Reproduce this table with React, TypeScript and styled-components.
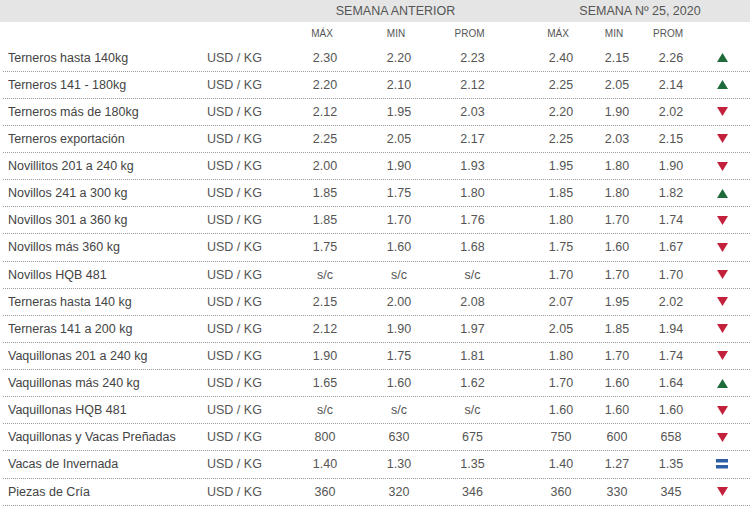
import React from "react";
import styled, { createGlobalStyle } from "styled-components";

type Trend = "up" | "down" | "same";

type Row = {
  name: string;
  prev: [string, string, string];
  cur: [string, string, string];
  trend: Trend;
};

const rows: Row[] = [
  { name: "Terneros hasta 140kg", prev: ["2.30", "2.20", "2.23"], cur: ["2.40", "2.15", "2.26"], trend: "up" },
  { name: "Terneros 141 - 180kg", prev: ["2.20", "2.10", "2.12"], cur: ["2.25", "2.05", "2.14"], trend: "up" },
  { name: "Terneros más de 180kg", prev: ["2.12", "1.95", "2.03"], cur: ["2.20", "1.90", "2.02"], trend: "down" },
  { name: "Terneros exportación", prev: ["2.25", "2.05", "2.17"], cur: ["2.25", "2.03", "2.15"], trend: "down" },
  { name: "Novillitos 201 a 240 kg", prev: ["2.00", "1.90", "1.93"], cur: ["1.95", "1.80", "1.90"], trend: "down" },
  { name: "Novillos 241 a 300 kg", prev: ["1.85", "1.75", "1.80"], cur: ["1.85", "1.80", "1.82"], trend: "up" },
  { name: "Novillos 301 a 360 kg", prev: ["1.85", "1.70", "1.76"], cur: ["1.80", "1.70", "1.74"], trend: "down" },
  { name: "Novillos más 360 kg", prev: ["1.75", "1.60", "1.68"], cur: ["1.75", "1.60", "1.67"], trend: "down" },
  { name: "Novillos HQB 481", prev: ["s/c", "s/c", "s/c"], cur: ["1.70", "1.70", "1.70"], trend: "down" },
  { name: "Terneras hasta 140 kg", prev: ["2.15", "2.00", "2.08"], cur: ["2.07", "1.95", "2.02"], trend: "down" },
  { name: "Terneras 141 a 200 kg", prev: ["2.12", "1.90", "1.97"], cur: ["2.05", "1.85", "1.94"], trend: "down" },
  { name: "Vaquillonas 201 a 240 kg", prev: ["1.90", "1.75", "1.81"], cur: ["1.80", "1.70", "1.74"], trend: "down" },
  { name: "Vaquillonas más 240 kg", prev: ["1.65", "1.60", "1.62"], cur: ["1.70", "1.60", "1.64"], trend: "up" },
  { name: "Vaquillonas HQB 481", prev: ["s/c", "s/c", "s/c"], cur: ["1.60", "1.60", "1.60"], trend: "down" },
  { name: "Vaquillonas y Vacas Preñadas", prev: ["800", "630", "675"], cur: ["750", "600", "658"], trend: "down" },
  { name: "Vacas de Invernada", prev: ["1.40", "1.30", "1.35"], cur: ["1.40", "1.27", "1.35"], trend: "same" },
  { name: "Piezas de Cría", prev: ["360", "320", "346"], cur: ["360", "330", "345"], trend: "down" },
];

const GlobalStyle = createGlobalStyle`
  html, body {
    margin: 0;
    padding: 0;
    background: #ffffff;
  }
  body {
    font-family: "Liberation Sans", Arial, sans-serif;
  }
`;

const COLS = "200px 85px 74px 74px 73px 24px 56px 56px 52px 56px";

const Table = styled.div`
  width: 750px;
  color: #4a4a4a;
`;

const WeekBar = styled.div`
  display: grid;
  grid-template-columns: ${COLS};
  height: 22px;
  align-items: center;
  background: #e5e5e5;
  font-size: 12.5px;
  color: #555;
`;

const WeekTitle = styled.div<{ $from: number; $to: number }>`
  grid-column: ${(p) => p.$from} / ${(p) => p.$to};
  text-align: center;
`;

const SubHead = styled.div`
  display: grid;
  grid-template-columns: ${COLS};
  height: 22.5px;
  align-items: center;
  font-size: 10px;
  color: #777;
`;

const DataRow = styled.div`
  display: grid;
  grid-template-columns: ${COLS};
  height: 26.125px;
  align-items: center;
  margin-left: 3px;
  border-bottom: 1px dotted #9a9a9a;
  font-size: 12.5px;
`;

const Name = styled.div`
  padding-left: 5px;
  color: #444;
  white-space: nowrap;
`;

const Unit = styled.div`
  padding-left: 4px;
  color: #555;
`;

const Cell = styled.div<{ $col?: number }>`
  text-align: center;
  color: #555;
  ${(p) => (p.$col ? `grid-column: ${p.$col};` : "")}
`;

const IconCell = styled.div`
  grid-column: 10;
  display: flex;
  justify-content: center;
  margin-left: -6px;
`;

const TrendIcon = ({ trend }: { trend: Trend }) => {
  if (trend === "up")
    return (
      <svg width="11" height="9" viewBox="0 0 11 9">
        <polygon points="5.5,0 11,9 0,9" fill="#1f6b3c" />
      </svg>
    );
  if (trend === "down")
    return (
      <svg width="11" height="9" viewBox="0 0 11 9">
        <polygon points="0,0 11,0 5.5,9" fill="#c3213b" />
      </svg>
    );
  return (
    <svg width="12" height="10" viewBox="0 0 12 10">
      <rect x="0" y="0" width="12" height="3.5" fill="#2d5fa5" />
      <rect x="0" y="6" width="12" height="3.5" fill="#2d5fa5" />
    </svg>
  );
};

export default function App() {
  return (
    <>
      <GlobalStyle />
      <Table>
        <WeekBar>
          <WeekTitle $from={3} $to={6}>SEMANA ANTERIOR</WeekTitle>
          <WeekTitle $from={7} $to={11}>SEMANA Nº 25, 2020</WeekTitle>
        </WeekBar>
        <SubHead>
          <Cell $col={3}>MÁX</Cell>
          <Cell>MIN</Cell>
          <Cell>PROM</Cell>
          <Cell $col={7}>MÁX</Cell>
          <Cell>MIN</Cell>
          <Cell>PROM</Cell>
        </SubHead>
        {rows.map((r) => (
          <DataRow key={r.name}>
            <Name>{r.name}</Name>
            <Unit>USD / KG</Unit>
            {r.prev.map((v, i) => (
              <Cell key={"p" + i}>{v}</Cell>
            ))}
            <Cell $col={7}>{r.cur[0]}</Cell>
            <Cell>{r.cur[1]}</Cell>
            <Cell>{r.cur[2]}</Cell>
            <IconCell>
              <TrendIcon trend={r.trend} />
            </IconCell>
          </DataRow>
        ))}
      </Table>
    </>
  );
}
